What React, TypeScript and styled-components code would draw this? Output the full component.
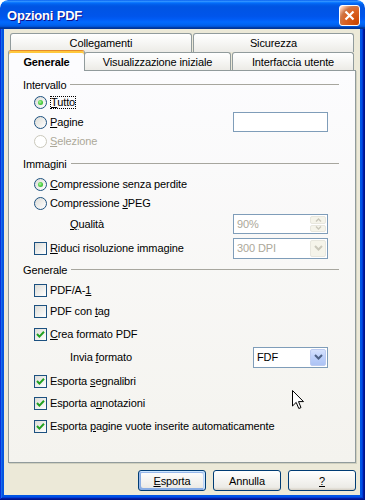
import React from "react";
import styled, { createGlobalStyle, css } from "styled-components";

const Global = createGlobalStyle`
  html, body { margin: 0; padding: 0; background: #ffffff; }
  body { font-family: "Liberation Sans", Arial, sans-serif; font-size: 11px; letter-spacing: -0.12px; color: #000; }
  #root { width: 365px; height: 500px; }
`;

const Window = styled.div`
  position: relative;
  width: 365px;
  height: 500px;
  display: flex;
  flex-direction: column;
  border-radius: 8px 8px 0 0;
  overflow: hidden;
`;

const TitleBar = styled.div`
  height: 29px;
  flex: none;
  display: flex;
  align-items: center;
  justify-content: space-between;
  padding: 0 5px 0 7px;
  border-radius: 8px 8px 0 0;
  background: linear-gradient(
    180deg,
    #0058ee 0%,
    #3593ff 4%,
    #288eff 6%,
    #127dff 8%,
    #036ffc 10%,
    #0262ee 14%,
    #0057e5 20%,
    #0054e3 24%,
    #0055eb 56%,
    #005bf5 66%,
    #026afe 76%,
    #0062ef 86%,
    #0052d6 92%,
    #0040ab 94%,
    #003092 100%
  );
`;

const Title = styled.div`
  color: #fff;
  font-family: "Liberation Sans", Arial, sans-serif;
  font-weight: bold;
  font-size: 13px;
  letter-spacing: -0.2px;
  padding-top: 1px;
  text-shadow: 1px 1px #0f1089;
`;

const CloseButton = styled.div`
  width: 21px;
  height: 21px;
  box-sizing: border-box;
  margin-top: 2px;
  border: 1px solid #fff;
  border-radius: 3px;
  display: flex;
  align-items: center;
  justify-content: center;
  background: radial-gradient(
    circle at 90% 90%,
    #cc4600 0%,
    #dc6527 55%,
    #cd7546 70%,
    #ffccb2 90%,
    #fff 100%
  );
`;

const Frame = styled.div`
  flex: 1;
  display: flex;
  padding: 0 5px 5px 4px;
  background: #0055e5;
  box-shadow: inset -1px -1px #00138c, inset 1px 0 #0831d9,
    inset -2px -2px #001ea0, inset 2px 0 #166aee, inset -3px -3px #003bda,
    inset 3px 0 #0855dd;
`;

const Client = styled.div`
  flex: 1;
  display: flex;
  flex-direction: column;
  background: #ece9d8;
  padding: 4px 4px 4px 4px;
`;

const TabRow = styled.div<{ $back?: boolean }>`
  display: flex;
  position: relative;
  ${(p) =>
    p.$back
      ? css`
          height: 19px;
          padding-left: 2px;
        `
      : css`
          height: 20px;
          margin-top: -2px;
          align-items: flex-end;
          z-index: 2;
        `}
`;

const Tab = styled.div<{ $w: number; $h: number; $ml?: number; $active?: boolean }>`
  box-sizing: border-box;
  flex: none;
  position: relative;
  width: ${(p) => p.$w}px;
  height: ${(p) => p.$h}px;
  margin-left: ${(p) => p.$ml ?? 0}px;
  border: 1px solid #919b9c;
  border-bottom: none;
  border-radius: 3px 3px 0 0;
  background: linear-gradient(180deg, #ffffff 0%, #f7f7f5 45%, #ecebe6 100%);
  display: flex;
  align-items: center;
  justify-content: center;
  white-space: nowrap;
  ${(p) =>
    p.$active &&
    css`
      z-index: 3;
      margin-bottom: -1px;
      padding-top: 2px;
      font-weight: bold;
      background: #fcfcfe;
      border-top: 1px solid #e68b2c;
      box-shadow: inset 0 2px #ffc83c;
    `}
`;

const Panel = styled.div`
  box-sizing: border-box;
  height: 393px;
  flex: none;
  border: 1px solid #919b9c;
  background: linear-gradient(180deg, #fcfcfe 0%, #f4f3ee 100%);
  box-shadow: 1px 1px 0 #d0d0bf;
  display: flex;
  flex-direction: column;
  padding: 6px 16px 0 14px;
`;

const GroupHeader = styled.div<{ $mt?: number }>`
  height: 16px;
  display: flex;
  align-items: center;
  gap: 4px;
  margin-top: ${(p) => p.$mt ?? 0}px;
  white-space: nowrap;
`;

const Rule = styled.div`
  flex: 1;
  height: 0;
  margin-top: -1px;
  border-top: 1px solid #a7a69e;
`;

const Row = styled.div<{ $mt?: number; $indent?: number }>`
  height: 18px;
  display: flex;
  align-items: center;
  margin-top: ${(p) => p.$mt ?? 0}px;
  padding-left: ${(p) => p.$indent ?? 11}px;
  white-space: nowrap;
`;

const Label = styled.span<{ $disabled?: boolean; $focus?: boolean }>`
  color: ${(p) => (p.$disabled ? "#aca899" : "#000")};
  ${(p) =>
    p.$focus &&
    css`
      line-height: 11px;
      outline: 1px dotted #000;
      margin-left: 1px;
    `}
`;

const Mn = styled.span`
  text-decoration: underline;
`;

const CheckBox = styled.div`
  box-sizing: border-box;
  width: 13px;
  height: 13px;
  flex: none;
  margin-right: 3px;
  border: 1px solid #1c5180;
  background: linear-gradient(135deg, #dcdcd7 0%, #ffffff 100%);
  display: flex;
  align-items: center;
  justify-content: center;
`;

const RadioCircle = styled.div<{ $disabled?: boolean }>`
  box-sizing: border-box;
  width: 13px;
  height: 13px;
  flex: none;
  margin-right: 3px;
  border-radius: 50%;
  border: 1px solid ${(p) => (p.$disabled ? "#cac8bb" : "#1c5180")};
  background: ${(p) =>
    p.$disabled ? "#ffffff" : "linear-gradient(135deg, #dcdcd7 0%, #ffffff 100%)"};
  display: flex;
  align-items: center;
  justify-content: center;
`;

const RadioDot = styled.div`
  width: 5px;
  height: 5px;
  border-radius: 50%;
  background: radial-gradient(circle at 40% 40%, #b4f5a8 0%, #55d24a 45%, #21a121 100%);
`;

const FieldBox = styled.div<{ $w: number; $h: number; $disabled?: boolean }>`
  box-sizing: border-box;
  width: ${(p) => p.$w}px;
  height: ${(p) => p.$h}px;
  flex: none;
  margin-left: auto;
  margin-right: 11px;
  border: 1px solid #7f9db9;
  background: #fff;
  display: flex;
  align-items: center;
  padding: 1px 1px 1px 2px;
  color: ${(p) => (p.$disabled ? "#aca899" : "#000")};
`;

const FieldText = styled.span`
  flex: 1;
  padding-left: 1px;
`;

const DropButton = styled.div<{ $disabled?: boolean }>`
  box-sizing: border-box;
  width: 16px;
  height: 100%;
  flex: none;
  border-radius: 2px;
  display: flex;
  align-items: center;
  justify-content: center;
  ${(p) =>
    p.$disabled
      ? css`
          border: 1px solid #e8e7de;
          background: #f5f4ea;
        `
      : css`
          border: 1px solid #bccbf1;
          background: linear-gradient(180deg, #d6e2fd 0%, #bccffa 50%, #adc3f4 100%);
        `}
`;

const SpinButtons = styled.div`
  width: 16px;
  height: 100%;
  flex: none;
  display: flex;
  flex-direction: column;
  gap: 1px;
`;

const SpinHalf = styled.div`
  flex: 1;
  box-sizing: border-box;
  border: 1px solid #e8e7de;
  border-radius: 2px;
  background: #f5f4ea;
  display: flex;
  align-items: center;
  justify-content: center;
`;

const ButtonRow = styled.div`
  display: flex;
  justify-content: flex-end;
  gap: 7px;
  margin-top: 7px;
`;

const PushButton = styled.div<{ $default?: boolean }>`
  box-sizing: border-box;
  width: 68px;
  height: 21px;
  border: 1px solid #003c74;
  border-radius: 3px;
  background: linear-gradient(180deg, #ffffff 0%, #ecebe6 86%, #d6d0c5 100%);
  display: flex;
  align-items: center;
  justify-content: center;
  ${(p) =>
    p.$default &&
    css`
      box-shadow: inset -1px 1px #cee7ff, inset 1px 2px #98b8ea,
        inset -2px 2px #bcd4f6, inset 1px -1px #89ade4, inset 2px -2px #89ade4;
    `}
`;

const Cursor = styled.svg`
  position: absolute;
  left: 292px;
  top: 390px;
`;

const Check = () => (
  <svg width="9" height="9" viewBox="0 0 9 9">
    <path d="M1 4 L3.4 6.6 L8 1.8" fill="none" stroke="#21a121" strokeWidth="2" />
  </svg>
);

const Chevron = ({ color }: { color: string }) => (
  <svg width="9" height="6" viewBox="0 0 9 6">
    <path d="M1 1 L4.5 4.5 L8 1" fill="none" stroke={color} strokeWidth="2" />
  </svg>
);

const Radio = ({ checked, disabled }: { checked?: boolean; disabled?: boolean }) => (
  <RadioCircle $disabled={disabled}>{checked && <RadioDot />}</RadioCircle>
);

const Box = ({ checked }: { checked?: boolean }) => <CheckBox>{checked && <Check />}</CheckBox>;

export default function App() {
  return (
    <>
      <Global />
      <Window>
        <TitleBar>
          <Title>Opzioni PDF</Title>
          <CloseButton>
            <svg width="13" height="13" viewBox="0 0 13 13">
              <path d="M2.5 2.5 L10.5 10.5 M10.5 2.5 L2.5 10.5" stroke="#fff" strokeWidth="2.2" />
            </svg>
          </CloseButton>
        </TitleBar>
        <Frame>
          <Client>
            <TabRow $back>
              <Tab $w={182} $h={19}>Collegamenti</Tab>
              <Tab $w={161} $h={19} $ml={1}>Sicurezza</Tab>
            </TabRow>
            <TabRow>
              <Tab $w={77} $h={21} $active>Generale</Tab>
              <Tab $w={147} $h={18} $ml={-1}>Visualizzazione iniziale</Tab>
              <Tab $w={122} $h={18} $ml={1}>Interfaccia utente</Tab>
            </TabRow>
            <Panel>
              <GroupHeader>
                Intervallo
                <Rule />
              </GroupHeader>
              <Row>
                <Radio checked />
                <Label $focus>
                  <Mn>T</Mn>utto
                </Label>
              </Row>
              <Row $mt={2}>
                <Radio />
                <Label>
                  <Mn>P</Mn>agine
                </Label>
                <FieldBox $w={95} $h={20} />
              </Row>
              <Row $mt={1}>
                <Radio disabled />
                <Label $disabled>
                  <Mn>S</Mn>elezione
                </Label>
              </Row>

              <GroupHeader $mt={6}>
                Immagini
                <Rule />
              </GroupHeader>
              <Row $mt={3}>
                <Radio checked />
                <Label>
                  <Mn>C</Mn>ompressione senza perdite
                </Label>
              </Row>
              <Row $mt={1}>
                <Radio />
                <Label>
                  Compressione <Mn>J</Mn>PEG
                </Label>
              </Row>
              <Row $mt={3} $indent={47}>
                <Label>
                  <Mn>Q</Mn>ualità
                </Label>
                <FieldBox $w={95} $h={20} $disabled>
                  <FieldText>90%</FieldText>
                  <SpinButtons>
                    <SpinHalf>
                      <svg width="7" height="4" viewBox="0 0 7 4">
                        <path d="M1 3.5 L3.5 1 L6 3.5" fill="none" stroke="#cac8bb" strokeWidth="1.4" />
                      </svg>
                    </SpinHalf>
                    <SpinHalf>
                      <svg width="7" height="4" viewBox="0 0 7 4">
                        <path d="M1 0.5 L3.5 3 L6 0.5" fill="none" stroke="#cac8bb" strokeWidth="1.4" />
                      </svg>
                    </SpinHalf>
                  </SpinButtons>
                </FieldBox>
              </Row>
              <Row $mt={6}>
                <Box />
                <Label>
                  <Mn>R</Mn>iduci risoluzione immagine
                </Label>
                <FieldBox $w={95} $h={21} $disabled>
                  <FieldText>300 DPI</FieldText>
                  <DropButton $disabled>
                    <Chevron color="#cac8bb" />
                  </DropButton>
                </FieldBox>
              </Row>

              <GroupHeader $mt={5}>
                Generale
                <Rule />
              </GroupHeader>
              <Row $mt={3}>
                <Box />
                <Label>
                  PDF/A-<Mn>1</Mn>
                </Label>
              </Row>
              <Row $mt={3}>
                <Box />
                <Label>
                  PDF con <Mn>t</Mn>ag
                </Label>
              </Row>
              <Row $mt={5}>
                <Box checked />
                <Label>
                  <Mn>C</Mn>rea formato PDF
                </Label>
              </Row>
              <Row $mt={5} $indent={47}>
                <Label>
                  Invia <Mn>f</Mn>ormato
                </Label>
                <FieldBox $w={75} $h={21}>
                  <FieldText>FDF</FieldText>
                  <DropButton>
                    <Chevron color="#4d6185" />
                  </DropButton>
                </FieldBox>
              </Row>
              <Row $mt={6}>
                <Box checked />
                <Label>
                  Esporta <Mn>s</Mn>egnalibri
                </Label>
              </Row>
              <Row $mt={4}>
                <Box checked />
                <Label>
                  Esporta a<Mn>n</Mn>notazioni
                </Label>
              </Row>
              <Row $mt={5}>
                <Box checked />
                <Label>
                  Esporta <Mn>p</Mn>agine vuote inserite automaticamente
                </Label>
              </Row>
            </Panel>
            <ButtonRow>
              <PushButton $default>
                <span>
                  <Mn>E</Mn>sporta
                </span>
              </PushButton>
              <PushButton>Annulla</PushButton>
              <PushButton>
                <Mn>?</Mn>
              </PushButton>
            </ButtonRow>
          </Client>
        </Frame>
        <Cursor width="13" height="20" viewBox="0 0 13 20">
          <path
            d="M0.5 0.5 L0.5 16 L4.2 12.4 L6.8 18.5 L9 17.6 L6.5 11.6 L11.5 11.6 Z"
            fill="#fff"
            stroke="#000"
            strokeWidth="1"
            strokeLinejoin="miter"
          />
        </Cursor>
      </Window>
    </>
  );
}
